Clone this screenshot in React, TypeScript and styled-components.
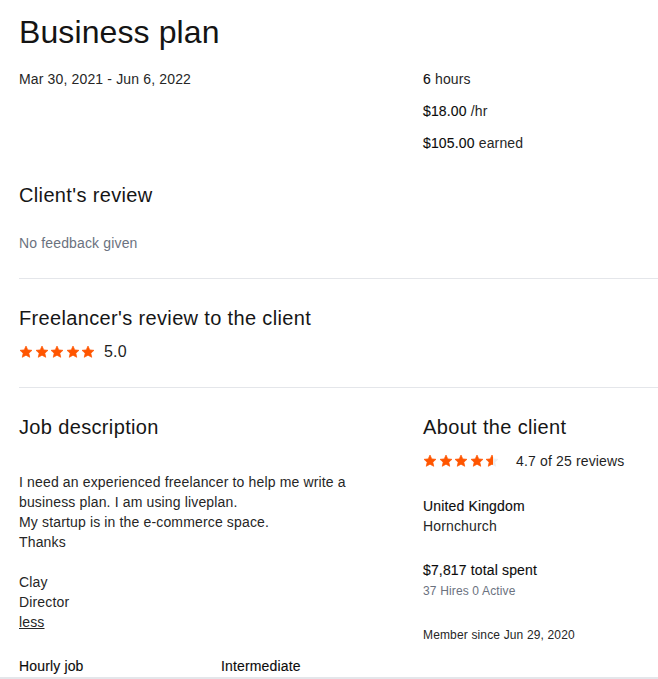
import React from "react";
import styled, { createGlobalStyle } from "styled-components";

const Global = createGlobalStyle`
  html, body { margin: 0; padding: 0; background: #ffffff; }
  body { font-family: "Liberation Sans", Arial, sans-serif; color: #1f1f1f; letter-spacing: 0.15px; }
  * { box-sizing: border-box; }
`;

const Page = styled.div`
  width: 658px;
  border-bottom: 2px solid #e4e6ea;
`;

const Inner = styled.div`
  padding-left: 19px;
`;

const Title = styled.h1`
  margin: 12px 0 0;
  font-size: 32px;
  line-height: 40px;
  font-weight: 400;
  letter-spacing: 0.1px;
  color: #141414;
`;

const Columns = styled.div<{ $top?: number }>`
  display: grid;
  grid-template-columns: 404px 1fr;
  margin-top: ${(p) => p.$top ?? 0}px;
`;

const Col = styled.div`
  display: flex;
  flex-direction: column;
`;

const Text = styled.div<{ $top?: number; $muted?: boolean; $small?: boolean; $strong?: boolean }>`
  margin-top: ${(p) => p.$top ?? 0}px;
  font-size: ${(p) => (p.$small ? 12 : 14)}px;
  line-height: ${(p) => (p.$small ? 16 : 20)}px;
  color: ${(p) => (p.$muted ? "#6b7280" : p.$strong ? "#0c0c0c" : "#262626")};
  -webkit-text-stroke: ${(p) => (p.$strong ? "0.12px #0c0c0c" : "0")};
`;

const Strong = styled.span`
  color: #0c0c0c;
  -webkit-text-stroke: 0.12px #0c0c0c;
`;

const StatList = styled.div`
  display: flex;
  flex-direction: column;
  gap: 12px;
`;

const Heading = styled.h2<{ $top?: number }>`
  margin: ${(p) => p.$top ?? 0}px 0 0;
  font-size: 20px;
  line-height: 28px;
  font-weight: 400;
  letter-spacing: 0.35px;
  color: #161616;
`;

const Divider = styled.hr`
  margin: 25px 0 0;
  border: none;
  border-top: 1px solid #e4e6ea;
  height: 0;
`;

const RatingRow = styled.div<{ $top?: number; $gap?: number }>`
  display: flex;
  align-items: center;
  gap: ${(p) => p.$gap ?? 9}px;
  margin-top: ${(p) => p.$top ?? 0}px;
  height: 20px;
`;

const Stars = styled.div`
  display: flex;
  gap: 1.5px;
`;

const RatingText = styled.span<{ $size?: number }>`
  font-size: ${(p) => p.$size ?? 14}px;
  color: #1f1f1f;
`;

const Description = styled.div`
  margin-top: 31px;
  font-size: 14px;
  line-height: 20px;
  color: #262626;
  white-space: pre-line;
`;

const LessLink = styled.a`
  display: block;
  font-size: 14px;
  line-height: 20px;
  color: #262626;
  text-decoration: underline;
`;

const Facts = styled.div`
  display: grid;
  grid-template-columns: 202px 1fr;
  margin-top: 24px;
  padding-bottom: 1px;
`;

const STAR = "M12 1.8l3.05 6.6 7.2.75-5.4 4.85 1.55 7.1L12 17.45 5.6 21.1l1.55-7.1-5.4-4.85 7.2-.75z";

function Star({ fill, id }: { fill: number; id: string }) {
  return (
    <svg width="14" height="14" viewBox="0 0 24 24">
      <defs>
        <linearGradient id={id} x1="0" x2="1" y1="0" y2="0">
          <stop offset={fill} stopColor="#ff5500" />
          <stop offset={fill} stopColor="#eceef1" />
        </linearGradient>
      </defs>
      <path d={STAR} fill={`url(#${id})`} stroke={`url(#${id})`} strokeWidth="1.2" strokeLinejoin="round" />
    </svg>
  );
}

function StarRating({ value, name }: { value: number; name: string }) {
  return (
    <Stars>
      {[0, 1, 2, 3, 4].map((i) => (
        <Star key={i} id={`${name}-${i}`} fill={Math.max(0, Math.min(1, value - i))} />
      ))}
    </Stars>
  );
}

export default function App() {
  return (
    <>
      <Global />
      <Page>
        <Inner>
          <Title>Business plan</Title>
          <Columns $top={17}>
            <Col>
              <Text>Mar 30, 2021 - Jun 6, 2022</Text>
            </Col>
            <StatList>
              <Text>
                <Strong>6</Strong> hours
              </Text>
              <Text>
                <Strong>$18.00</Strong> /hr
              </Text>
              <Text>
                <Strong>$105.00</Strong> earned
              </Text>
            </StatList>
          </Columns>

          <Heading $top={28}>Client's review</Heading>
          <Text $top={24} $muted>
            No feedback given
          </Text>
          <Divider />

          <Heading $top={25}>Freelancer's review to the client</Heading>
          <RatingRow $top={10}>
            <StarRating value={5} name="fr" />
            <RatingText $size={16}>5.0</RatingText>
          </RatingRow>
          <Divider />

          <Columns $top={25}>
            <Col>
              <Heading>Job description</Heading>
              <Description>
                {"I need an experienced freelancer to help me write a\nbusiness plan. I am using liveplan.\nMy startup is in the e-commerce space.\nThanks\n\nClay\nDirector"}
              </Description>
              <LessLink href="#">less</LessLink>
              <Facts>
                <Text $strong>Hourly job</Text>
                <Text $strong>Intermediate</Text>
              </Facts>
            </Col>
            <Col>
              <Heading>About the client</Heading>
              <RatingRow $top={10} $gap={17}>
                <StarRating value={4.6} name="cl" />
                <RatingText>4.7 of 25 reviews</RatingText>
              </RatingRow>
              <Text $top={25} $strong>
                United Kingdom
              </Text>
              <Text>Hornchurch</Text>
              <Text $top={24} $strong>
                $7,817 total spent
              </Text>
              <Text $top={3} $small $muted>
                37 Hires 0 Active
              </Text>
              <Text $top={28} $small>
                Member since Jun 29, 2020
              </Text>
            </Col>
          </Columns>
        </Inner>
      </Page>
    </>
  );
}
